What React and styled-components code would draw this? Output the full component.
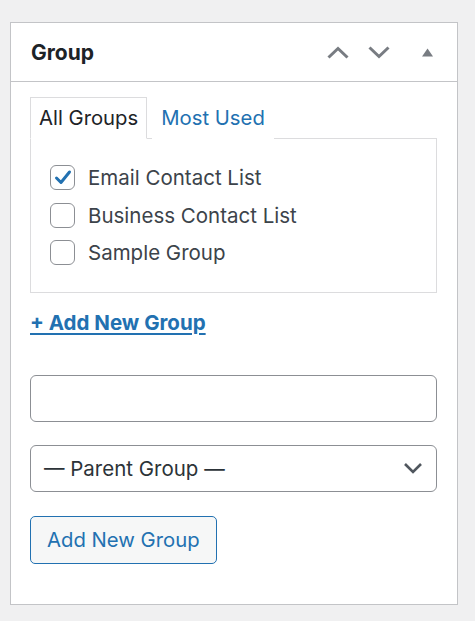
import styled, { createGlobalStyle } from "styled-components";

const GlobalStyle = createGlobalStyle`
  html, body {
    margin: 0;
    padding: 0;
    background: #f0f0f1;
    font-family: Inter, "Noto Sans", "Liberation Sans", sans-serif;
    color: #3c434a;
  }
  * { box-sizing: border-box; }
`;

const Page = styled.div`
  width: 475px;
  height: 621px;
  padding: 22px 17px 0 10px;
`;

const Postbox = styled.div`
  width: 448px;
  background: #fff;
  border: 1px solid #c3c4c7;
`;

const Header = styled.div`
  height: 59px;
  display: flex;
  align-items: center;
  padding: 0 10px 0 20px;
  border-bottom: 1px solid #c3c4c7;
`;

const Title = styled.h2`
  flex: 1;
  margin: 0;
  font-size: 21px;
  font-weight: 700;
  color: #1d2327;
`;

const HeaderActions = styled.div`
  display: flex;
  align-items: center;
`;

const IconBtn = styled.button`
  width: ${(p) => p.$w}px;
  margin-left: ${(p) => p.$ml || 0}px;
  height: 30px;
  padding: 0;
  border: 0;
  background: none;
  display: flex;
  align-items: center;
  justify-content: center;
  color: #787c82;
`;

const Inside = styled.div`
  padding: 15px 20px 40px 19px;
`;

const Tabs = styled.ul`
  display: flex;
  margin: 0;
  padding: 0;
  list-style: none;
`;

const Tab = styled.li`
  height: 42px;
  padding: 0 8px 2px;
  margin-bottom: -1px;
  display: flex;
  align-items: center;
  font-size: 20.3px;
  color: ${(p) => (p.$active ? "#1d2327" : "#2271b1")};
  background: #fff;
  border: 1px solid ${(p) => (p.$active ? "#dcdcde" : "transparent")};
  border-bottom-color: ${(p) => (p.$active ? "#fff" : "transparent")};
  margin-right: ${(p) => (p.$active ? "5px" : "0")};
`;

const TabPanel = styled.div`
  border: 1px solid #dcdcde;
  padding: 20px 19px;
  display: flex;
  flex-direction: column;
`;

const Row = styled.label`
  height: 37.5px;
  display: flex;
  align-items: center;
  gap: 13px;
  font-size: 20.5px;
  color: #3c434a;
`;

const Box = styled.span`
  width: 25px;
  height: 25px;
  border: 1px solid #8c8f94;
  border-radius: 6px;
  display: flex;
  align-items: center;
  justify-content: center;
  background: #fff;
`;

const AddLink = styled.a`
  display: inline-block;
  margin-top: 17px;
  font-size: 20.5px;
  font-weight: 700;
  color: #2271b1;
  text-decoration: underline;
  text-underline-offset: 3px;
  text-decoration-thickness: 2px;
`;

const Field = styled.div`
  height: 47px;
  border: 1px solid #8c8f94;
  border-radius: 6px;
  background: #fff;
  display: flex;
  align-items: center;
  justify-content: space-between;
  padding: 0 13px;
  font-size: 20.5px;
  color: #2c3338;
  margin-top: ${(p) => p.$mt}px;
`;

const Button = styled.button`
  margin-top: 24px;
  height: 48px;
  padding: 0 16px;
  border: 1px solid #2271b1;
  border-radius: 5px;
  background: #f6f7f7;
  color: #2271b1;
  font-family: inherit;
  font-size: 20.3px;
`;

const groups = [
  { name: "Email Contact List", checked: true },
  { name: "Business Contact List", checked: false },
  { name: "Sample Group", checked: false },
];

export default function App() {
  return (
    <>
      <GlobalStyle />
      <Page>
        <Postbox>
          <Header>
            <Title>Group</Title>
            <HeaderActions>
              <IconBtn $w={41}>
                <svg width="22" height="13" viewBox="0 0 22 13">
                  <path d="M1.5 11.5 L11 2.5 L20.5 11.5" fill="none" stroke="currentColor" strokeWidth="3" />
                </svg>
              </IconBtn>
              <IconBtn $w={41}>
                <svg width="22" height="13" viewBox="0 0 22 13">
                  <path d="M1.5 1.5 L11 10.5 L20.5 1.5" fill="none" stroke="currentColor" strokeWidth="3" />
                </svg>
              </IconBtn>
              <IconBtn $w={40} $ml={8}>
                <svg width="11" height="9" viewBox="0 0 11 9">
                  <path d="M0 8.5 L5.5 0.5 L11 8.5 Z" fill="currentColor" />
                </svg>
              </IconBtn>
            </HeaderActions>
          </Header>
          <Inside>
            <Tabs>
              <Tab $active>All Groups</Tab>
              <Tab>Most Used</Tab>
            </Tabs>
            <TabPanel>
              {groups.map((g) => (
                <Row key={g.name}>
                  <Box>
                    {g.checked && (
                      <svg width="20" height="20" viewBox="0 0 20 20">
                        <path d="M3.5 10 L8 14.5 L16.5 4" fill="none" stroke="#2271b1" strokeWidth="3" strokeLinecap="round" strokeLinejoin="round" />
                      </svg>
                    )}
                  </Box>
                  {g.name}
                </Row>
              ))}
            </TabPanel>
            <AddLink href="#">+ Add New Group</AddLink>
            <Field $mt={40} />
            <Field $mt={23}>
              <span>— Parent Group —</span>
              <svg width="20" height="12" viewBox="0 0 20 12">
                <path d="M2 2 L10 10 L18 2" fill="none" stroke="#50575e" strokeWidth="2.6" />
              </svg>
            </Field>
            <Button>Add New Group</Button>
          </Inside>
        </Postbox>
      </Page>
    </>
  );
}
